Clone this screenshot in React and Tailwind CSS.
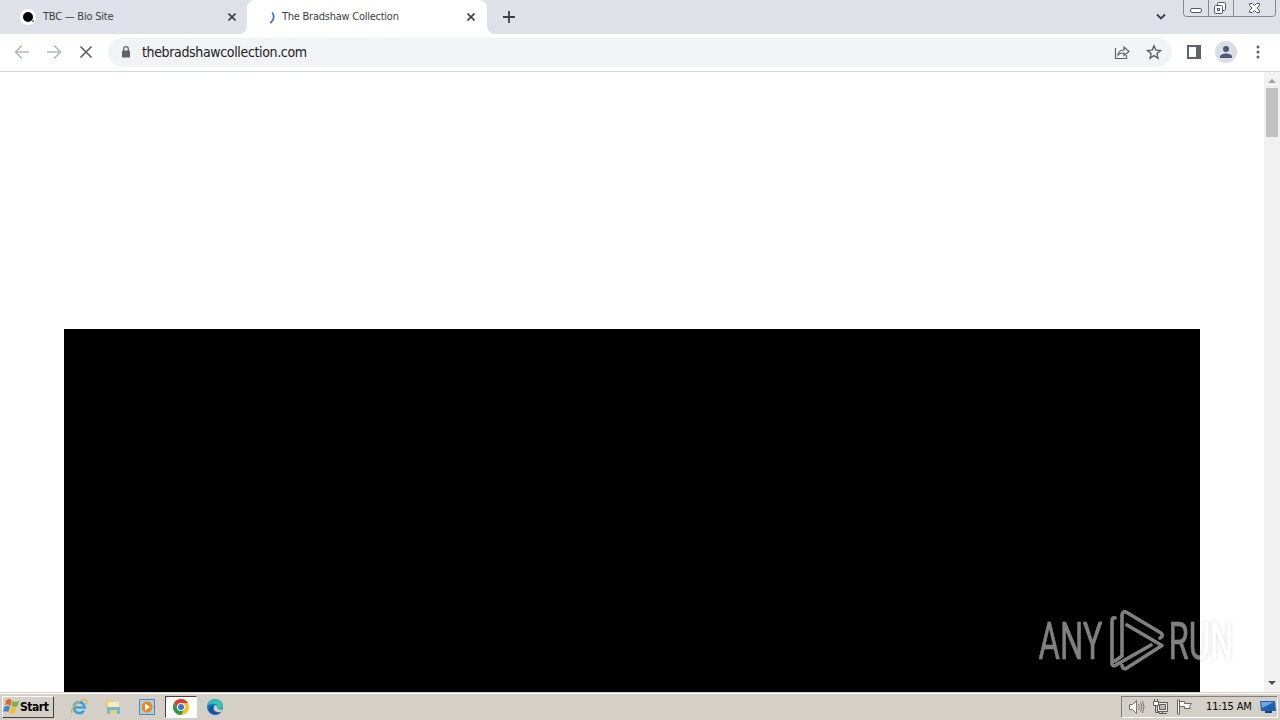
import React from 'react';

function Tab({ title, active, icon, titleClass }) {
  return (
    <div className={active ? 'relative flex w-60 h-[34px] items-center rounded-t-lg bg-white pl-[21px]' : 'flex w-[247px] h-[34px] items-center pl-5'}>
      {active && (
        <svg className="absolute -left-2 bottom-0 h-2 w-64" viewBox="0 0 256 8">
          <path d="M0 8h8V0a8 8 0 0 1-8 8ZM256 8h-8V0a8 8 0 0 0 8 8Z" fill="#fff" />
        </svg>
      )}
      {icon}
      <span className={titleClass}>{title}</span>
      <svg className={active ? 'ml-auto mr-3 h-2 w-2' : 'ml-auto mr-[11px] h-2 w-2'} viewBox="0 0 8 8">
        <path d="M.5.5l7 7M7.5.5l-7 7" stroke="#3c4043" strokeWidth="1.6" />
      </svg>
    </div>
  );
}

function WindowButtons() {
  return (
    <svg className="absolute left-[1183px] top-0 h-[18px] w-[94px]" viewBox="0 0 94 18" fill="none">
      <path d="M.5 0v13.5q0 3 3 3h86q3 0 3-3V0M25.5 0v16.5M50.5 0v16.5" stroke="#84878d" />
      <rect x="7.5" y="8.5" width="11" height="4" rx="1.5" fill="#fff" stroke="#55585e" />
      <rect x="34.5" y="2.5" width="8" height="8" rx="1" fill="#fff" stroke="#55585e" />
      <rect x="31.5" y="5.5" width="8" height="8" rx="1" fill="#fff" stroke="#55585e" />
      <rect x="34.5" y="8.5" width="2" height="2" stroke="#55585e" />
      <path d="M66.5 3.5h3l2 2 2-2h3v2l-2.5 2.5 2.5 2.5v2h-3l-2-2-2 2h-3v-2l2.5-2.5-2.5-2.5z" fill="#fff" stroke="#55585e" />
    </svg>
  );
}

function TabStrip() {
  return (
    <div className="relative flex h-[34px] bg-[#dee1e8]">
      <Tab
        title="TBC — Bio Site"
        titleClass="ml-[7px] pt-px whitespace-nowrap text-[11px] tracking-[-0.23px] text-[#3c4043]"
        icon={
          <svg className="h-4 w-4" viewBox="0 0 16 16">
            <circle cx="8" cy="8" r="8" fill="#fff" />
            <circle cx="8" cy="8" r="5" fill="#000" />
            <circle cx="13" cy="12" r=".8" fill="#000" />
          </svg>
        }
      />
      <Tab
        active
        title="The Bradshaw Collection"
        titleClass="ml-[-2px] pt-px whitespace-nowrap text-[11px] tracking-[-0.25px] text-[#3c4043]"
        icon={
          <svg className="h-4 w-4" viewBox="0 0 16 16" fill="none">
            <path d="M4.2 3.5c2.6 3.2 2 7.700-2 10.500" stroke="#3b73d1" strokeWidth="1.8" />
          </svg>
        }
      />
      <svg className="ml-4 mt-[11px] h-3 w-3" viewBox="0 0 12 12">
        <path d="M6 0v12M0 6h12" stroke="#3c4043" strokeWidth="1.8" />
      </svg>
      <svg className="absolute left-[1156px] top-[13px] h-2 w-[10px]" viewBox="0 0 10 8" fill="none">
        <path d="M1 1.5l4 4 4-4" stroke="#3c4043" strokeWidth="1.8" />
      </svg>
      <WindowButtons />
    </div>
  );
}

function Toolbar() {
  return (
    <div className="flex h-[38px] items-center border-b border-[#d5d7da] bg-white pb-px pl-[14px]">
      <svg className="h-4 w-4" viewBox="0 0 16 16" fill="none" stroke="#b5b7ba" strokeWidth="1.7">
        <path d="M15 8H2M8 1.5L1.5 8 8 14.5" />
      </svg>
      <svg className="ml-4 h-4 w-4" viewBox="0 0 16 16" fill="none" stroke="#b5b7ba" strokeWidth="1.7">
        <path d="M1 8h13M8 1.5L14.5 8 8 14.5" />
      </svg>
      <svg className="ml-4 h-4 w-4" viewBox="0 0 16 16" fill="none" stroke="#5f6368" strokeWidth="1.7">
        <path d="M2.5 2.5l11 11M13.5 2.5l-11 11" />
      </svg>
      <div className="ml-[14px] flex h-[29px] w-[1064px] items-center rounded-full bg-[#f1f3f4] pl-[13px]">
        <svg className="h-3 w-[10px]" viewBox="0 0 10 12" fill="none">
          <rect x="1" y="4.5" width="8" height="7" rx="1" fill="#5f6368" />
          <path d="M2.7 5V3a2.300 2.300 0 0 1 4.600 0v2" stroke="#5f6368" strokeWidth="1.3" />
        </svg>
        <span className="ml-[11px] pt-px text-[14px] tracking-[-0.35px] text-[#202124]">thebradshawcollection.com</span>
        <svg className="ml-auto h-4 w-4" viewBox="0 0 16 16" fill="none" stroke="#5f6368" strokeWidth="1.2">
          <path d="M1.500 4v10.500h11V11M4 11c.5-4 3-5 6-5V3l5 4.500-5 4V9C7 9 5.500 9.500 4 11z" />
        </svg>
        <svg className="ml-4 mr-[10px] h-4 w-4" viewBox="0 0 16 16" fill="none" stroke="#5f6368" strokeWidth="1.4">
          <path d="M8 1.800l1.800 4.300 4.700.4-3.600 3.100 1.100 4.600L8 11.700l-4 2.500 1.100-4.600-3.600-3.100 4.700-.4z" />
        </svg>
      </div>
      <svg className="ml-[15px] h-[14px] w-[14px]" viewBox="0 0 14 14">
        <path d="M0 0h14v14H0zM2 2v10h7V2z" fill="#5f6368" fillRule="evenodd" />
      </svg>
      <svg className="ml-[14px] h-[22px] w-[22px]" viewBox="0 0 22 22">
        <circle cx="11" cy="11" r="11" fill="#dadde2" />
        <circle cx="11" cy="8" r="3" fill="#4b5878" />
        <path d="M5 17v-1.500c0-2 4-3 6-3s6 1 6 3V17z" fill="#4b5878" />
      </svg>
      <svg className="ml-[19px] h-[14px] w-1" viewBox="0 0 4 14" fill="#5f6368">
        <circle cx="2" cy="2" r="1.5" />
        <circle cx="2" cy="7" r="1.5" />
        <circle cx="2" cy="12" r="1.5" />
      </svg>
    </div>
  );
}

function Scrollbar() {
  return (
    <div className="flex w-4 flex-col items-center bg-[#f1f1f1]">
      <svg className="h-4 w-4" viewBox="0 0 16 16">
        <path d="M4 11l4-4 4 4z" fill="#a3a3a3" />
      </svg>
      <div className="h-[49px] w-3 bg-[#c1c1c1]" />
      <svg className="mt-auto h-[17px] w-4" viewBox="0 0 16 17">
        <path d="M4 6l4 4 4-4z" fill="#505050" />
      </svg>
    </div>
  );
}

function Watermark() {
  return (
    <svg
      className="absolute left-[1030px] top-[596px] h-[88px] w-[230px] overflow-visible drop-shadow-[0_0_2px_rgba(0,0,0,0.25)]"
      viewBox="0 -8 230 88"
      fill="none"
      opacity=".5"
    >
      <g fill="#fff" stroke="#fff" strokeWidth=".6" fontFamily="Roboto, 'Liberation Sans', sans-serif" fontSize="52">
        <text x="8.5" y="55" textLength="64" lengthAdjust="spacingAndGlyphs">ANY</text>
        <text x="138.5" y="55" textLength="65" lengthAdjust="spacingAndGlyphs">RUN</text>
      </g>
      <path
        d="M85 14q-3-1-3 3v43q1 3 4 1l35-20M92 52V11q1-4 4-3l35 21q3 3-1 5M97 21l35 20.500-36 23q-3 1-4-3M92 52l-7 5"
        stroke="#fff"
        strokeWidth="3.6"
        strokeLinejoin="round"
        strokeLinecap="round"
      />
    </svg>
  );
}

function StartButton() {
  return (
    <div className="flex h-[22px] w-[52px] items-center border border-b-[#404040] border-l-white border-r-[#404040] border-t-white bg-[#d4d0c8]">
      <svg className="h-[17px] w-[17px] shrink-0" viewBox="0 0 16 16">
        <path d="M3 2q3-2 5 0L7 7.500Q4 5.500 2 6.500z" fill="#e9602d" />
        <path d="M8.500 2.500q3 2 7 0l-2 5.500q-3 1-5.500-.5z" fill="#76b743" />
        <path d="M1.500 8q2.500-1.500 5 0l-1.500 5.500Q3 11.500 0 13z" fill="#3f88cf" />
        <path d="M7.500 8.500q2.500 1.500 5.500 0l-2 5.500q-3 1.500-5 0z" fill="#f6bd2b" />
      </svg>
      <span className="text-[12px] font-bold tracking-[-0.45px] text-black">Start</span>
    </div>
  );
}

function QuickLaunch() {
  return (
    <div className="flex items-center">
      <svg className="ml-4 h-[18px] w-[18px]" viewBox="0 0 18 18" fill="none">
        <path d="M14 12.500a5.500 5.500 0 1 1 .8-3H5" stroke="#3aa0df" strokeWidth="2.6" />
        <path d="M2 15C-1 11 11 0 16 2q2 1 0 4" stroke="#ddb847" strokeWidth="1.3" />
      </svg>
      <svg className="ml-4 h-[18px] w-[18px]" viewBox="0 0 18 18">
        <path d="M2 2h5l1 2h7v11H2z" fill="#e9cc6b" />
        <path d="M4 4h11v6H4z" fill="#f9edb5" />
        <path d="M3 9h13v7h-3v-4H6v4H3z" fill="#72b8dd" />
      </svg>
      <svg className="ml-4 h-[18px] w-[18px]" viewBox="0 0 18 18">
        <path d="M1.500 1.500h15v15h-15z" fill="#aad0ee" stroke="#5585b3" />
        <circle cx="9" cy="9" r="5.5" fill="#ed861b" />
        <path d="M7 5.500v7l5-3.500z" fill="#fff" />
      </svg>
      <div className="ml-[9px] flex h-[22px] w-8 items-center justify-center border border-b-white border-l-[#404040] border-r-white border-t-[#404040] bg-white">
        <svg className="h-4 w-4" viewBox="0 0 16 16">
          <circle cx="8" cy="8" r="8" fill="#fbc116" />
          <path d="M1.070 4A8 8 0 0 1 14.930 4H8L4.540 10z" fill="#e33b2e" />
          <path d="M1.070 4A8 8 0 0 0 8 16l3.460-6H4.540z" fill="#269b4c" />
          <circle cx="8" cy="8" r="4" fill="#fff" />
          <circle cx="8" cy="8" r="3" fill="#3974df" />
        </svg>
      </div>
      <svg className="ml-[9px] h-[18px] w-[18px]" viewBox="0 0 18 18">
        <circle cx="9" cy="9" r="8" fill="#1574bd" />
        <path d="M1 8C3-1 17-1 17 8c0 4-5 4-6 2 2-4-5-6-10-2z" fill="#38bfb3" />
        <path d="M7 8c-2 5 2 8 8 6-5 5-13 1-12-4 1-2 3-2 4-2z" fill="#164f98" />
        <path d="M9 7q3 1 2 3 2 3 6 1l-2 3q-8 1-7-5z" fill="#d4d0c8" />
      </svg>
    </div>
  );
}

function Tray() {
  return (
    <div className="ml-auto mr-0.5 flex h-[22px] w-[157px] items-center border border-b-white border-l-[#808080] border-r-white border-t-[#808080] pl-1.5">
      <svg className="h-4 w-[17px]" viewBox="0 0 17 16" fill="none" stroke="#77746f">
        <path d="M1.500 5.500h3l4-4v13l-4-4h-3z" fill="#fff" />
        <path d="M10.500 5q2 3 0 6M12.500 3.500q3 4.500 0 9M14.500 2q3 6 0 12" />
      </svg>
      <svg className="ml-[7px] h-4 w-[17px]" viewBox="0 0 17 16" fill="none" stroke="#5f5d59">
        <path d="M5.500 3.500h10v9h-10z" fill="#eee" />
        <path d="M7.500 5.500h6v5h-6z" fill="#bbb8b1" />
        <path d="M1.500 2.500h5v4h-5z" fill="#fff" />
        <path d="M2.500 0v2.500M5.500 0v2.500M3.500 6.500v7h4M7 14.500h8M10.500 12v2" />
      </svg>
      <svg className="ml-[7px] h-4 w-[17px]" viewBox="0 0 17 16" fill="none" stroke="#686661">
        <path d="M3.500 2.500h5v2h7l-2 3 1 2h-6v-2h-5z" fill="#fff" />
        <path d="M1.500 1v14h2V1z" fill="#fff" />
      </svg>
      <span className="ml-[13px] pt-px whitespace-nowrap text-[11px] tracking-[-0.15px] text-black">11:15 AM</span>
      <svg className="ml-auto mr-px h-4 w-4 shrink-0" viewBox="0 0 16 16">
        <path d="M0 2h15l1 10H1z" fill="#1f60ae" />
        <path d="M1 3h13L2 9z" fill="#6ba8df" />
        <path d="M5 12h7v2H5z" fill="#234675" />
      </svg>
    </div>
  );
}

function Taskbar() {
  return (
    <div className="flex h-7 items-center border-t border-[#d4d0c8] bg-[#d4d0c8] pl-0.5 shadow-[inset_0_1px_0_#fff]">
      <StartButton />
      <QuickLaunch />
      <Tray />
    </div>
  );
}

function App() {
  return (
    <div className="relative flex h-[720px] w-[1280px] flex-col overflow-hidden bg-white font-['DejaVu_Sans_Condensed','DejaVu_Sans',sans-serif]">
      <TabStrip />
      <Toolbar />
      <div className="flex min-h-0 flex-1">
        <main className="flex-1 overflow-hidden pl-16 pt-[257px]">
          <div className="h-full w-[1136px] bg-black" />
        </main>
        <Scrollbar />
      </div>
      <Taskbar />
      <Watermark />
    </div>
  );
}

export default App;
